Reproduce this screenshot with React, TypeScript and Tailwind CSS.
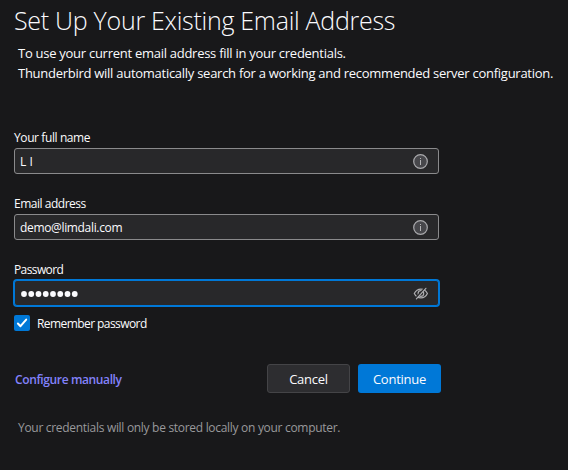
import { useState, type ReactNode } from "react";

function InfoIcon() {
  return (
    <svg width="15" height="15" viewBox="0 0 15 15" fill="none" className="shrink-0">
      <circle cx="7.5" cy="7.5" r="6.8" fill="#47474b" stroke="#aaaaad" strokeWidth="1.2" />
      <path d="M7.5 6V11" stroke="#b4b4b6" strokeWidth="1" />
      <path d="M7.5 4V5" stroke="#b4b4b6" strokeWidth="1" />
    </svg>
  );
}

function HiddenEyeIcon() {
  return (
    <svg width="15" height="15" viewBox="0 0 15 15" fill="none" stroke="#adadb0" strokeWidth="1.2" strokeLinecap="round" className="shrink-0">
      <path d="M1.3 7.5C2.8 4.5 5.1 3.1 7.9 3.1S13 4.5 14.4 7.5C13 10.5 10.7 11.9 7.9 11.9S2.8 10.5 1.3 7.5Z" />
      <circle cx="7.9" cy="7.5" r="2.8" />
      <path d="M3.6 11.3L11.4 2.6" stroke="#28282a" strokeWidth="1.6" />
      <path d="M3.4 12.8L12.9 2.3" />
    </svg>
  );
}

function MaskDots({ count }: { count: number }) {
  return (
    <svg width="60" height="8" viewBox="0 0 60 8" fill="#fbfbfe" className="mt-[2px]">
      {Array.from({ length: count }, (_, i) => (
        <circle key={i} cx={3 + i * 7.25} cy="4" r="2.9" />
      ))}
    </svg>
  );
}

function Field({ label, tracking, children }: { label: string; tracking: string; children: ReactNode }) {
  return (
    <div className="flex h-[66px] flex-col">
      <label className={`h-5 text-[12px] leading-5 ${tracking}`}>{label}</label>
      {children}
    </div>
  );
}

const inputRow = "flex h-[26px] w-[425px] items-center justify-between rounded-[3px] bg-[#28282a] pr-[10px]";

export default function App() {
  const [remember, setRemember] = useState(true);
  return (
    <main className="h-[470px] w-[568px] overflow-hidden bg-[#18181a] pl-[14px] font-['Open_Sans','Noto_Sans',sans-serif] text-[#fbfbfe]">
      <h1 className="h-[43px] pt-[3px] text-[25px] leading-[34px] font-light tracking-[-0.28px] whitespace-nowrap">
        Set Up Your Existing Email Address
      </h1>
      <p className="h-[85px] pl-1 text-[13px] leading-5 tracking-[-0.27px] whitespace-nowrap">
        To use your current email address fill in your credentials.
        <br />
        Thunderbird will automatically search for a working and recommended server configuration.
      </p>
      <Field label="Your full name" tracking="tracking-[-0.4px]">
        <div className={`${inputRow} border border-[#8a8a8c] pl-[5px]`}>
          <span className="pt-px text-[12px]">L I</span>
          <InfoIcon />
        </div>
      </Field>
      <Field label="Email address" tracking="tracking-[-0.48px]">
        <div className={`${inputRow} border border-[#8a8a8c] pl-[5px]`}>
          <span className="pt-px text-[12px] tracking-[-0.34px]">demo@limdali.com</span>
          <InfoIcon />
        </div>
      </Field>
      <Field label="Password" tracking="tracking-[-0.6px]">
        <div className={`${inputRow} border border-[#0078d7] pl-[6px] ring-1 ring-[#0078d7]`}>
          <MaskDots count={8} />
          <HiddenEyeIcon />
        </div>
      </Field>
      <button
        type="button"
        role="checkbox"
        aria-checked={remember}
        onClick={() => setRemember(!remember)}
        className="-mt-[11px] flex h-4 items-center gap-[7px] text-[12px] tracking-[-0.57px]"
      >
        <span className="flex size-4 items-center justify-center rounded-[2px] bg-[#0078d7]">
          {remember && (
            <svg width="16" height="16" viewBox="0 0 16 16" fill="none" stroke="white" strokeWidth="2" strokeLinecap="round" strokeLinejoin="round">
              <path d="M3.9 8.5L6.5 11.2L12.2 4.6" />
            </svg>
          )}
        </span>
        <span className="pt-[2px]">Remember password</span>
      </button>
      <div className="mt-[33px] flex h-[29px] w-[427px] items-center gap-2 text-[13px]">
        <a href="#manual" className="mr-auto pt-[2px] pl-px text-[12px] font-semibold tracking-[-0.38px] text-[#8382fb]">
          Configure manually
        </a>
        <button type="button" className="h-[29px] w-[83px] rounded-[3px] border border-[#444447] bg-[#2d2d30] pt-[2px] tracking-[-0.25px]">
          Cancel
        </button>
        <button type="button" className="h-[29px] w-[83px] rounded-[3px] bg-[#0078d7] pt-[2px] tracking-[-0.25px]">
          Continue
        </button>
      </div>
      <p className="mt-[25px] pl-1 text-[12px] leading-5 tracking-[-0.3px] text-[#99999c]">
        Your credentials will only be stored locally on your computer.
      </p>
    </main>
  );
}
